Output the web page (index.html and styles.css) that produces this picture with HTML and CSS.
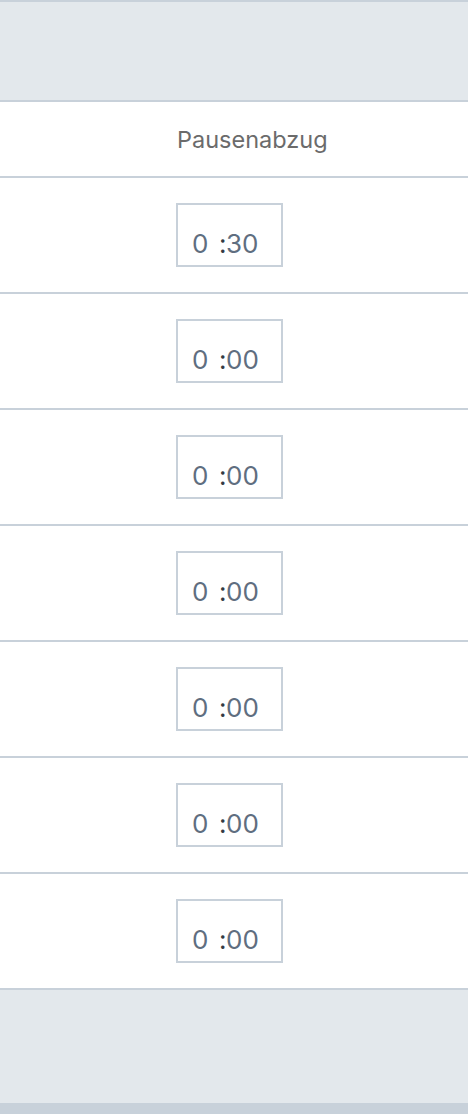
FILE: index.html
```html
<!DOCTYPE html>
<html lang="de">
<head>
<meta charset="utf-8">
<link rel="stylesheet" href="styles.css">
</head>
<body>
<div class="table">
  <div class="band band-top"></div>
  <div class="row head"><div class="cell"><span class="title">Pausenabzug</span></div></div>
  <div class="row"><div class="cell"><div class="time"><span class="h">0</span><span class="sep">:</span><span class="m">30</span></div></div></div>
  <div class="row"><div class="cell"><div class="time"><span class="h">0</span><span class="sep">:</span><span class="m">00</span></div></div></div>
  <div class="row"><div class="cell"><div class="time"><span class="h">0</span><span class="sep">:</span><span class="m">00</span></div></div></div>
  <div class="row"><div class="cell"><div class="time"><span class="h">0</span><span class="sep">:</span><span class="m">00</span></div></div></div>
  <div class="row"><div class="cell"><div class="time"><span class="h">0</span><span class="sep">:</span><span class="m">00</span></div></div></div>
  <div class="row"><div class="cell"><div class="time"><span class="h">0</span><span class="sep">:</span><span class="m">00</span></div></div></div>
  <div class="row"><div class="cell"><div class="time"><span class="h">0</span><span class="sep">:</span><span class="m">00</span></div></div></div>
  <div class="band band-bottom"></div>
  <div class="scrollbar"></div>
</div>
</body>
</html>
```
FILE: styles.css
```css
html, body {
  margin: 0;
  padding: 0;
  background: #ffffff;
  font-family: Inter, "Noto Sans", sans-serif;
}
.table {
  display: flex;
  flex-direction: column;
  width: 468px;
}
.band {
  background: #e3e8ec;
}
.band-top {
  height: 98px;
  border-top: 2px solid #c8d1da;
  border-bottom: 2px solid #c8d1da;
}
.band-bottom {
  height: 113px;
}
.scrollbar {
  height: 11px;
  background: #c8d1da;
}
.row {
  display: grid;
  grid-template-columns: 176px 1fr;
  height: 114px;
  border-bottom: 2px solid #c8d1da;
  align-items: center;
}
.row .cell {
  grid-column: 2;
}
.row.head {
  height: 74px;
}
.title {
  display: block;
  padding-left: 1px;
  font-size: 23.5px;
  color: #6b6b6b;
}
.time {
  box-sizing: border-box;
  width: 107px;
  height: 64px;
  border: 2px solid #c8d1da;
  padding: 24px 0 0 14px;
  font-size: 26px;
  line-height: 30px;
  color: #5f6e80;
  display: flex;
}
.time .h {
  width: 27px;
}
.time .sep {
  color: #333a44;
  width: 7px;
}
```
